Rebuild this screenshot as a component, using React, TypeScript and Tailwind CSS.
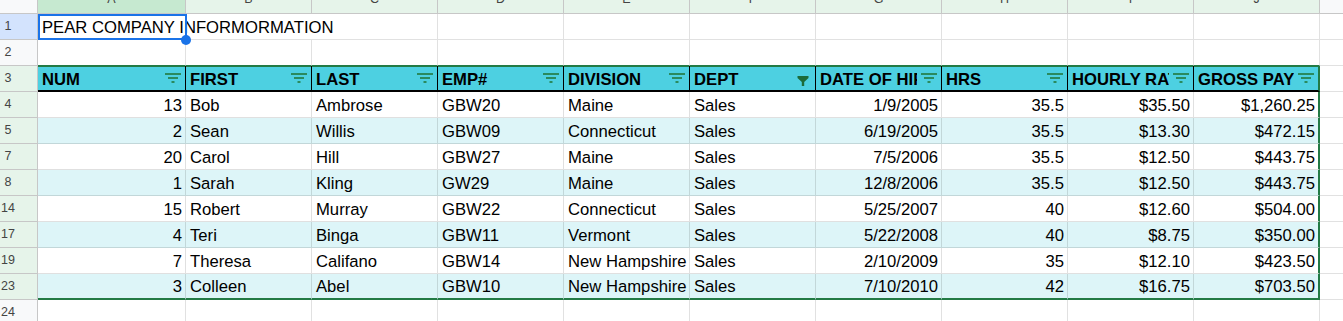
import React from "react";

const COLS = ["A", "B", "C", "D", "E", "F", "G", "H", "I", "J"];
const HEADERS = ["NUM", "FIRST", "LAST", "EMP#", "DIVISION", "DEPT", "DATE OF HIRE", "HRS", "HOURLY RATE", "GROSS PAY"];
const RIGHT = [true, false, false, false, false, false, true, true, true, true];

const DATA: { n: number; v: string[] }[] = [
  { n: 4, v: ["13", "Bob", "Ambrose", "GBW20", "Maine", "Sales", "1/9/2005", "35.5", "$35.50", "$1,260.25"] },
  { n: 5, v: ["2", "Sean", "Willis", "GBW09", "Connecticut", "Sales", "6/19/2005", "35.5", "$13.30", "$472.15"] },
  { n: 7, v: ["20", "Carol", "Hill", "GBW27", "Maine", "Sales", "7/5/2006", "35.5", "$12.50", "$443.75"] },
  { n: 8, v: ["1", "Sarah", "Kling", "GW29", "Maine", "Sales", "12/8/2006", "35.5", "$12.50", "$443.75"] },
  { n: 14, v: ["15", "Robert", "Murray", "GBW22", "Connecticut", "Sales", "5/25/2007", "40", "$12.60", "$504.00"] },
  { n: 17, v: ["4", "Teri", "Binga", "GBW11", "Vermont", "Sales", "5/22/2008", "40", "$8.75", "$350.00"] },
  { n: 19, v: ["7", "Theresa", "Califano", "GBW14", "New Hampshire", "Sales", "2/10/2009", "35", "$12.10", "$423.50"] },
  { n: 23, v: ["3", "Colleen", "Abel", "GBW10", "New Hampshire", "Sales", "7/10/2010", "42", "$16.75", "$703.50"] },
];

function FilterIcon() {
  return (
    <svg width="16" height="16" viewBox="0 0 16 16" className="shrink-0 mr-[4px]">
      <rect x="0" y="3" width="16" height="2" fill="#2a8a5e" />
      <rect x="3" y="7" width="10" height="2" fill="#2a8a5e" />
      <rect x="6.5" y="11" width="3" height="2" fill="#2a8a5e" />
    </svg>
  );
}

function FunnelIcon() {
  return (
    <svg width="16" height="16" viewBox="0 0 16 16" className="shrink-0 mr-[4px]">
      <path d="M2.5 6h11v1.9l-4.3 4.1v4h-2.4v-4L2.5 7.9z" fill="#1c6b3a" />
    </svg>
  );
}

function RowHead({ n, bg }: { n: number; bg: string }) {
  return (
    <div className={`h-[26px] flex items-center border-r border-b border-[#c7c7c7] ${bg}`}>
      <span className="w-[16px] text-center text-[12.5px] text-[#444]">{n}</span>
    </div>
  );
}

export default function App() {
  return (
    <div className="w-[1343px] h-[321px] overflow-hidden bg-white font-['Liberation_Sans',Arial,sans-serif] text-black">
      <div className="grid grid-cols-[38px_148px_repeat(9,126px)_1fr]">
        {/* column header row */}
        <div className="h-[14px] bg-[#f8f9fa] border-r border-b border-[#c7c7c7]" />
        {COLS.map((c, i) => (
          <div
            key={c}
            className={`h-[14px] overflow-hidden flex justify-center border-r border-b border-[#c7c7c7] ${
              i === 0 ? "bg-[#c6e9d0]" : "bg-[#e6f4ea]"
            }`}
          >
            <span className="block leading-[12px] -mt-[7px] text-[12.5px] text-[#444]">{c}</span>
          </div>
        ))}
        <div className="h-[14px] overflow-hidden flex justify-center border-b border-[#c7c7c7] bg-[#f8f9fa]">
          <span className="block leading-[12px] -mt-[7px] text-[12.5px] text-[#444] ml-[100px]">K</span>
        </div>

        {/* row 1 */}
        <RowHead n={1} bg="bg-[#d3e3fd]" />
        <div className="relative h-[26px] flex items-end pb-[2px] pl-[4px] border-r border-b border-[#e1e1e1]">
          <span className="relative z-10 whitespace-nowrap text-[16.67px] leading-[19px]">PEAR COMPANY INFORMORMATION</span>
          <div className="absolute top-0 left-0 -right-[2px] -bottom-[1px] border-2 border-[#1a73e8] z-20 pointer-events-none" />
          <div className="absolute -right-[6px] -bottom-[6px] w-[10px] h-[10px] rounded-full bg-[#1a73e8] z-30" />
        </div>
        {COLS.slice(1).map((c, i) => (
          <div
            key={c}
            className={`h-[26px] border-b border-[#e1e1e1] ${i === 0 ? "" : "border-r"}`}
          />
        ))}
        <div className="h-[26px] border-b border-[#e1e1e1]" />

        {/* row 2 */}
        <RowHead n={2} bg="bg-[#f8f9fa]" />
        {COLS.map((c) => (
          <div key={c} className="h-[26px] bg-white border-r border-r-[#e1e1e1] border-b border-b-[#237a45]" />
        ))}
        <div className="h-[26px] border-b border-[#e1e1e1]" />

        {/* row 3 table header */}
        <RowHead n={3} bg="bg-[#e6f4ea]" />
        {HEADERS.map((h, i) => (
          <div
            key={h}
            className={`h-[26px] flex items-end gap-[4px] pb-[1px] pl-[4px] bg-[#4dd0e1] shadow-[inset_0_1px_0_#237a45] border-b-2 border-b-black ${
              i === 9 ? "border-r-2 border-r-[#237a45]" : "border-r border-r-black"
            }`}
          >
            <span className="flex-1 min-w-0 overflow-hidden whitespace-nowrap font-bold text-[16.67px] leading-[19px]">
              {h}
            </span>
            <div className="self-center">{i === 5 ? <FunnelIcon /> : <FilterIcon />}</div>
          </div>
        ))}
        <div className="h-[26px] border-b border-[#e1e1e1]" />

        {/* data rows */}
        {DATA.map((row, r) => {
          const band = r % 2 === 1 ? "bg-[#ddf5f8]" : "bg-white";
          const last = r === DATA.length - 1;
          return (
            <React.Fragment key={row.n}>
              <RowHead n={row.n} bg="bg-[#e6f4ea]" />
              {row.v.map((v, i) => (
                <div
                  key={i}
                  className={`h-[26px] flex items-end pb-[2px] overflow-hidden whitespace-nowrap text-[16.67px] leading-[19px] ${band} ${
                    RIGHT[i] ? "justify-end pr-[3px]" : "pl-[4px]"
                  } ${i === 9 ? "border-r-2 border-r-[#237a45]" : "border-r border-r-black/[0.12]"} ${
                    last ? "border-b-2 border-b-[#237a45]" : "border-b border-b-black/[0.12]"
                  }`}
                >
                  {v}
                </div>
              ))}
              <div className="h-[26px] border-b border-[#e1e1e1]" />
            </React.Fragment>
          );
        })}

        {/* row 24 */}
        <RowHead n={24} bg="bg-[#f8f9fa]" />
        {COLS.map((c) => (
          <div key={c} className="h-[26px] border-r border-b border-[#e1e1e1]" />
        ))}
        <div className="h-[26px] border-b border-[#e1e1e1]" />
      </div>
    </div>
  );
}
